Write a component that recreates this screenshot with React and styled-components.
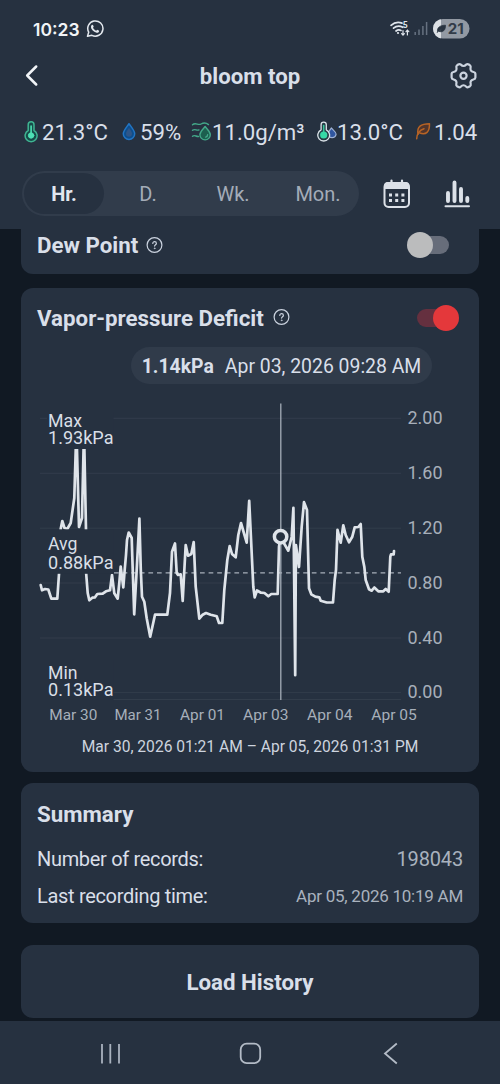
import React from 'react'
import styled, { createGlobalStyle } from 'styled-components'

const GlobalStyle = createGlobalStyle`
* {
    box-sizing: border-box;
}
body {
    margin: 0;
    background: #111923;
    font-family: Roboto, sans-serif;
    color: #d9dfe9;
}
`

const readings = [
    { icon: 'temp', value: '21.3°C', icw: 18, w: 66, gap: 14 },
    { icon: 'drop', value: '59%', icw: 18, w: 41, gap: 10 },
    { icon: 'humid', value: '11.0g/m³', icw: 21, w: 94, gap: 11 },
    { icon: 'dew', value: '13.0°C', icw: 20, w: 66, gap: 12 },
    { icon: 'leaf', value: '1.04', icw: 19, w: 43, gap: 0 },
]

const tabs = ['Hr.', 'D.', 'Wk.', 'Mon.']

const gridLines = [
    { y: 418.3, label: '2.00' },
    { y: 473.3, label: '1.60' },
    { y: 528.2, label: '1.20' },
    { y: 583, label: '0.80' },
    { y: 638, label: '0.40' },
    { y: 692.6, label: '0.00' },
]

const dates = [
    { x: 49.3, w: 48, label: 'Mar 30' },
    { x: 114.5, w: 47, label: 'Mar 31' },
    { x: 180, w: 45, label: 'Apr 01' },
    { x: 243, w: 45.5, label: 'Apr 03' },
    { x: 307, w: 45.5, label: 'Apr 04' },
    { x: 371.3, w: 45.5, label: 'Apr 05' },
]

const stats = [
    { y: 427, w: 34, label: 'Max' },
    { y: 444.3, w: 65.5, label: '1.93kPa' },
    { y: 549.7, w: 29.5, label: 'Avg' },
    { y: 569.3, w: 65.5, label: '0.88kPa' },
    { y: 679, w: 29.5, label: 'Min' },
    { y: 696.3, w: 65.5, label: '0.13kPa' },
]

const line = `40.7,585 42,590.3 45,589 48.3,589.5 51.3,598.7 57.3,598.7 59,574 60.7,529 62.3,521 64.5,528
67.3,529 70.7,523 74.3,498 76.4,428 79,527 82,518 84,430 86.2,540 86.2,574 87.7,593 89.3,600.3 92.3,597.7 95,597.3
97.3,594 102.7,593.7 106,591.3 110,590.3 112,575 114.3,593.3 117.7,598.7 119.3,583 120.7,566.7 123.3,587.3
124.7,570 126,555 127,540 128.7,532.5 131.7,538 132.3,557 134.2,614.3 136.7,570 139.4,518.5 140.8,570 142,596.7
144.3,601.7 146.7,618.3 150.2,636.7 153,624 155,614.7 167.3,614.7 170,593 172,551.7 175,543.5 176.7,573 178,575
180.7,574.3 182.7,601 183.8,580 185.7,545 188,555.7 191.3,554 193.7,542 195.7,586.7 199.3,618.7 202.7,614.7
206,613 210.7,614.7 216.7,616.3 219,623 222.3,623 224.3,590 227.3,560 229.7,546 232,554 235.7,557.3 238.3,535
241,523 246.7,542.7 249.2,500.8 251.7,553.3 253.3,586.7 254.7,597.3 257,590.5 261,592.7 264.5,593 268.3,596.3
271.3,594 277.7,594 279,546.7 280.5,537 285,545 288.3,550.7 291.7,536.7 293.4,507.8 295.2,675.2 295.9,545 299,567
301.7,526.7 304,502.2 307,510 309,588.3 311.3,594.3 315.3,596.7 319.3,597.3 320.7,600.7 326.7,602.5 333,602.3
334.7,580 336,570 337.5,529.8 340.7,542.7 343.3,525.3 345.7,535 349,542.3 352.3,536.7 354.7,527.3 358.3,527
360.7,524 362.3,556.7 364.3,566.7 365.7,580 369,589.3 371.7,590.7 374.3,587.5 378.3,591.3 383.3,591.3 385.7,589
388.7,591.7 390.3,556.7 391,554.3 393.7,554.3 394,551`

const ReadingIcon = ({ name, width }) => (
    <svg width={width} height="24" viewBox={`0 0 ${width} 24`} fill="none" strokeLinecap="round" strokeLinejoin="round">
        {name === 'temp' && (
            <g stroke="#3fb592" strokeWidth="1.5">
                <path d="M4.2 10.500V4.700a2.900 2.900 0 0 1 5.800 0v5.800a6 6 0 1 1-5.800 0Z" fill="#164c49" />
                <path d="M7.1 6v8" stroke="#4de0b4" strokeWidth="1.6" />
                <circle cx="7.1" cy="15.500" r="2.700" fill="#4de0b4" stroke="#4de0b4" strokeWidth="1" />
            </g>
        )}
        {name === 'drop' && (
            <>
                <path d="M7 3.700C4.500 7.300 1.300 10.600 1.300 13.800a5.700 5.700 0 0 0 11.400 0C12.700 10.600 9.500 7.300 7 3.700Z" fill="#0d4e8d" stroke="#2275c4" strokeWidth="1.500" />
                <path d="M7 7.700C5.500 10.200 4 11.700 4 13.700a3 3 0 0 0 6 0c0-2-1.500-3.500-3-6Z" fill="#2f5688" />
            </>
        )}
        {name === 'humid' && (
            <g stroke="#43a889" strokeWidth="1.400">
                <path d="M1.500 4.800c3.200-3 5.500 1 8.600-.8 2-1.200 4.500-1.800 7.400.6M1.500 10.300c2.500-2 4 .6 6.500-.4M1.500 16.300c2.500-2 3.500.6 6 .2" />
                <path d="M14.100 6.500C12.200 9.300 8.900 11.500 8.900 14.700a5.200 5.200 0 0 0 10.400 0c0-3.200-3.300-5.400-5.200-8.200Z" fill="#1c604f" />
                <path d="M16.600 14.800c0 1.200-.8 2.100-1.900 2.300" />
            </g>
        )}
        {name === 'dew' && (
            <>
                <path d="M14.300 8c-1.600 2.200-3.300 4-3.300 6.200a4.100 4.100 0 0 0 8.100 0c0-2.200-2.900-4-4.800-6.200Z" fill="#2f559f" stroke="#9fb2d4" strokeWidth="1.200" />
                <path d="M4.100 9.800V4.800a2.600 2.600 0 0 1 5.200 0v5a5.900 5.900 0 1 1-5.200 0Z" fill="#253d46" stroke="#dce3e9" strokeWidth="1.300" />
                <path d="M6.700 5.500v8" stroke="#36c79c" strokeWidth="1.500" />
                <circle cx="6.700" cy="15" r="3.600" fill="#36d9a6" />
            </>
        )}
        {name === 'leaf' && (
            <g stroke="#b76325" strokeWidth="1.500">
                <path d="M3.100 14.200C1.500 6.500 6 3.700 14.500 3.700c.2 8.500-3.500 11.500-9.800 9.300" fill="#51352c" />
                <path d="M1.700 18.700c.3-5.200 2.700-8.500 7.300-10" />
            </g>
        )}
    </svg>
)

const Help = () => (
    <svg width="17" height="17" viewBox="0 0 17 17" fill="none" stroke="#cbd3df" strokeLinecap="round">
        <circle cx="8.500" cy="8" r="7.400" strokeWidth="1.200" />
        <path d="M6.800 6.400c0-2.300 3.600-2.200 3.600 0 0 1.300-1.800 1.300-1.800 2.700" strokeWidth="1.200" />
        <circle cx="8.600" cy="11.300" r=".4" strokeWidth=".8" />
    </svg>
)

const StatusIcons = () => (
    <svg width="82" height="24" viewBox="388 17 82 24">
        <g fill="none" stroke="#dfe5ec" strokeWidth="1.700" strokeLinecap="round">
            <path d="M391 25.300c3.200-2.800 7.200-3.500 11-2.200" />
            <path d="M393.500 28.200c2.500-2.200 6.300-2.600 9.300-.9" />
            <path d="M396 31c1.500-1.200 3.400-1.400 5-.6" />
            <path d="M403 30.500v4.500m-1.400-1.400 1.400 1.500 1.400-1.500M407.400 35v-4.800m-1.400 1.500 1.400-1.500 1.400 1.500" strokeWidth="1.200" />
        </g>
        <circle cx="398" cy="33" r="1.100" fill="#dfe5ec" />
        <text x="402.700" y="28" fontSize="8.500" fontWeight="700" fill="#dfe5ec">5</text>
        <g stroke="#667180" strokeWidth="1.500">
            <path d="M415.200 32v3M419 29.500V35M422.900 26v9" />
            <path d="M426.600 22v13" />
        </g>
        <clipPath id="battery"><rect x="433" y="19" width="36.500" height="19.500" rx="9.750" /></clipPath>
        <g clipPath="url(#battery)">
            <rect x="433" y="19" width="37" height="20" fill="#9299a3" />
            <rect x="433" y="19" width="8" height="20" fill="#dce0e5" />
        </g>
        <path d="M437.500 31.500c-.6-4 2.500-6.300 8-6.300.2 5-2.600 7.500-6.500 6.200l3.500-3.200-5.500 4.300Z" fill="#283340" stroke="#283340" strokeWidth=".7" />
        <text x="447.700" y="34" fontSize="15" fontWeight="700" fontFamily="Inter, sans-serif" textLength="16" lengthAdjust="spacingAndGlyphs" fill="#323c48">21</text>
    </svg>
)

const Chart = () => (
    <svg width="426" height="330" viewBox="37 398 426 330">
        {gridLines.map((g) => (
            <React.Fragment key={g.label}>
                <path d={`M40 ${g.y}H401`} stroke="#323d4b" />
                <text x="407.500" y={g.y + 5.700} fontSize="17.500" fill="#a7afba" textLength="35" lengthAdjust="spacingAndGlyphs">{g.label}</text>
            </React.Fragment>
        ))}
        <path d="M40 699.500H401" stroke="#323d4b" />
        <path d="M114 572.800H401" stroke="#a7afb9" strokeWidth="1.300" strokeDasharray="4.700 3.900" />
        <polyline points={line} fill="none" stroke="#dfe4ea" strokeWidth="2.700" strokeLinejoin="round" strokeLinecap="round" />
        <g fill="#263140">
            <rect x="47" y="412" width="66.500" height="37" />
            <rect x="47" y="529.300" width="66.500" height="44.500" />
            <rect x="40" y="660" width="73.500" height="42" />
        </g>
        <path d="M280.800 403.500V700" stroke="#a5adb8" strokeWidth="1.300" />
        <circle cx="280.600" cy="536.700" r="6.200" fill="#263140" stroke="#dfe4ea" strokeWidth="3.500" />
        {stats.map((s) => (
            <text key={s.label} x="48" y={s.y} fontSize="17.600" fill="#d9dfe7" textLength={s.w} lengthAdjust="spacingAndGlyphs">{s.label}</text>
        ))}
        {dates.map((d) => (
            <text key={d.label} x={d.x} y="719.500" fontSize="15.500" fill="#a7afba" textLength={d.w} lengthAdjust="spacingAndGlyphs">{d.label}</text>
        ))}
    </svg>
)

const App = () => {
    return (
        <>
            <GlobalStyle />
            <Screen>
                <TopPanel>
                    <StatusBar>
                        <Clock>10:23</Clock>
                        <svg width="18" height="18" viewBox="0 0 18 18" fill="none" stroke="#e3e8ee" strokeWidth="1.500">
                            <path d="M1.500 16.300l1.200-4.100A7.600 7.600 0 1 1 5.900 15.300Z" strokeLinejoin="round" />
                            <path d="M5.600 5.200c.5-.7 1.200-.5 1.500.1l.6 1.500-.7 1c.8 1.500 1.800 2.400 3.200 3l1-1 1.900.9c.3 1.400-1.100 2.200-2.400 2-3.200-.5-6-3.700-5.700-6.100.1-.6.300-1.100.6-1.400Z" fill="#e3e8ee" stroke="none" />
                        </svg>
                        <Spacer />
                        <StatusIcons />
                    </StatusBar>
                    <Header>
                        <svg width="30" height="24" viewBox="0 0 30 24" fill="none" stroke="#f1f4f7" strokeWidth="2.500" strokeLinecap="round" strokeLinejoin="round">
                            <path d="M16.200 2.500 7.200 11.500l9 9" />
                        </svg>
                        <Title>bloom top</Title>
                        <svg width="30" height="30" viewBox="0 0 30 30" fill="none" stroke="#ccd4df" strokeWidth="2.200" strokeLinejoin="round">
                            <path d="M10.200 3.500Q11.500 2.600 12.700 3.500Q15.500 6.500 18.300 3.500Q19.500 2.600 20.800 3.500L22 4.300Q23 5 22.600 6.400Q21.700 10.300 25.400 11Q27.400 11.400 27.400 13V16.500Q27.400 18 25.400 18.500Q21.700 19.500 22.700 23Q23 24.500 22 25.200L20.500 26Q19.300 26.700 18.300 25.700Q15.500 22.800 12.700 25.700Q11.700 26.700 10.500 26L9 25.200Q8 24.500 8.300 23Q9.300 19.500 5.600 18.500Q3.600 18 3.600 16.500V13Q3.600 11.400 5.600 11Q9.300 10.300 8.400 6.400Q8 5 9 4.300Z" />
                            <circle cx="15.500" cy="14.700" r="3.100" />
                        </svg>
                    </Header>
                    <Readings>
                        {readings.map((r) => (
                            <Reading key={r.icon} $gap={r.gap}>
                                <ReadingIcon name={r.icon} width={r.icw} />
                                <Value $width={r.w}>{r.value}</Value>
                            </Reading>
                        ))}
                    </Readings>
                    <Controls>
                        <Tabs>
                            {tabs.map((t, i) => (
                                <Tab key={t} $active={i === 0}>{t}</Tab>
                            ))}
                        </Tabs>
                        <Actions>
                            <svg width="28" height="30" viewBox="0 0 28 30">
                                <rect x="1.500" y="4" width="24.500" height="24" rx="4" fill="none" stroke="#dce1e8" strokeWidth="2" />
                                <path d="M1 10V7a4 4 0 0 1 4-4h17.500a4 4 0 0 1 4 4v3Z" fill="#dce1e8" />
                                <path d="M8.500 1.500v4M19 1.500v4" stroke="#dce1e8" strokeWidth="2.200" strokeLinecap="round" />
                                <path d="M6 16h3m3.200 0h3m3.200 0h3M6 21.500h3m3.200 0h3m3.200 0h3" stroke="#dce1e8" strokeWidth="2.900" />
                            </svg>
                            <svg width="28" height="30" viewBox="0 0 28 30" stroke="#dce1e8" strokeLinecap="round">
                                <path d="M5 14v8M11.500 3.500v18.500M18 10v12M24.300 19v3" strokeWidth="3.900" />
                                <path d="M2.500 27.300h23.500" strokeWidth="2" />
                            </svg>
                        </Actions>
                    </Controls>
                </TopPanel>
                <Content>
                    <DewCard>
                        <CardTitle $width="100px">Dew Point</CardTitle>
                        <Help />
                        <Spacer />
                        <Switch><Thumb /></Switch>
                    </DewCard>
                    <ChartCard>
                        <CardHead>
                            <CardTitle $width="227px">Vapor-pressure Deficit</CardTitle>
                            <Help />
                            <Spacer />
                            <Switch $on><Thumb $on /></Switch>
                        </CardHead>
                        <Selected>
                            <b>1.14kPa</b>
                            <span>Apr 03, 2026 09:28 AM</span>
                        </Selected>
                        <Chart />
                        <Range>Mar 30, 2026 01:21 AM – Apr 05, 2026 01:31 PM</Range>
                    </ChartCard>
                    <SummaryCard>
                        <CardTitle>Summary</CardTitle>
                        <SummaryRow>
                            <span>Number of records:</span>
                            <Amount>198043</Amount>
                        </SummaryRow>
                        <SummaryRow>
                            <span>Last recording time:</span>
                            <Amount $small>Apr 05, 2026 10:19 AM</Amount>
                        </SummaryRow>
                    </SummaryCard>
                    <LoadButton>Load History</LoadButton>
                </Content>
                <NavBar>
                    <svg width="30" height="30" viewBox="0 0 30 30" stroke="#a9b2be" strokeWidth="1.800">
                        <path d="M7 5v19.500M15.300 5v19.500M24 5v19.500" />
                    </svg>
                    <svg width="30" height="30" viewBox="0 0 30 30" fill="none" stroke="#b3bbc6" strokeWidth="1.800">
                        <rect x="5.700" y="4.700" width="19.500" height="19.500" rx="6" />
                    </svg>
                    <svg width="30" height="30" viewBox="0 0 30 30" fill="none" stroke="#b3bbc6" strokeWidth="1.800">
                        <path d="M21.800 4.500 10 14.500l11.800 10" />
                    </svg>
                </NavBar>
            </Screen>
        </>
    )
}

export default App

const Screen = styled.div`
width: 500px;
height: 1084px;
display: flex;
flex-direction: column;
overflow: hidden;
`
const TopPanel = styled.div`
height: 229px;
flex: none;
background: #263140;
`
const StatusBar = styled.div`
height: 58px;
padding: 0 30px 0 33px;
display: flex;
align-items: center;
`
const Clock = styled.span`
width: 53px;
font-family: Inter, sans-serif;
font-size: 17.500px;
font-weight: 600;
color: #f1f4f7;
`
const Spacer = styled.div`
flex: 1;
`
const Header = styled.div`
height: 36px;
padding: 0 22px 0 20px;
display: flex;
align-items: center;
justify-content: space-between;
`
const Title = styled.h1`
margin: 0;
padding-left: 2px;
font-size: 22.200px;
font-weight: 700;
`
const Readings = styled.div`
height: 76px;
padding-left: 24px;
display: flex;
align-items: center;
`
const Reading = styled.div`
display: flex;
align-items: center;
flex: none;
margin-right: ${(p) => p.$gap}px;
`
const Value = styled.span`
width: ${(p) => p.$width}px;
font-size: 22.200px;
white-space: nowrap;
`
const Controls = styled.div`
padding: 1px 29px 0 22px;
display: flex;
align-items: center;
justify-content: space-between;
`
const Tabs = styled.div`
width: 337px;
height: 45px;
padding: 2px 0 2px 2px;
border-radius: 23px;
background: #313c4b;
display: grid;
grid-template-columns: 80px 84px 84px 84px;
justify-content: space-between;
`
const Tab = styled.div`
border-radius: 21px;
display: flex;
align-items: center;
justify-content: center;
font-size: 20px;
font-weight: ${(p) => (p.$active ? 700 : 400)};
color: ${(p) => (p.$active ? '#e1e6ee' : '#a4acb8')};
background: ${(p) => (p.$active ? '#263140' : 'transparent')};
&:nth-child(n + 2) {
    padding-left: 2px;
}
`
const Actions = styled.div`
display: flex;
gap: 32px;
`
const Content = styled.div`
flex: 1;
padding: 0 21px;
overflow: hidden;
`
const Card = styled.div`
padding: 0 16px;
border-radius: 12px;
background: #263140;
`
const DewCard = styled(Card)`
height: 45px;
padding: 0 30px 13px 16px;
border-radius: 0 0 12px 12px;
display: flex;
align-items: center;
gap: 9px;
`
const ChartCard = styled(Card)`
height: 484px;
margin-top: 14px;
display: flex;
flex-direction: column;
`
const CardHead = styled.div`
height: 59px;
padding: 0 4px 0 0;
display: flex;
align-items: center;
gap: 9px;
`
const CardTitle = styled.h2`
margin: 0;
width: ${(p) => p.$width || 'auto'};
font-size: 22.300px;
font-weight: 700;
white-space: nowrap;
`
const Switch = styled.div`
width: 42px;
height: 26px;
display: flex;
align-items: center;
justify-content: ${(p) => (p.$on ? 'flex-end' : 'flex-start')};
background: linear-gradient(${(p) => (p.$on ? '#65303f, #65303f' : '#676d7a, #676d7a')}) center / 20px 18px no-repeat;
&::before {
    content: '';
    order: ${(p) => (p.$on ? 0 : 1)};
    width: 16px;
    height: 18px;
    border-radius: ${(p) => (p.$on ? '9px 0 0 9px' : '0 9px 9px 0')};
    background: ${(p) => (p.$on ? '#65303f' : '#676d7a')};
}
`
const Thumb = styled.div`
width: 26px;
height: 26px;
order: ${(p) => (p.$on ? 1 : 0)};
border-radius: 50%;
background: ${(p) => (p.$on ? '#e4383b' : '#bbbcbd')};
`
const Selected = styled.div`
height: 37px;
width: 301px;
margin: 0 0 14px 94px;
padding-top: 2px;
border-radius: 19px;
background: #303b4a;
display: flex;
align-items: center;
justify-content: center;
gap: 11px;
font-size: 19.400px;
white-space: nowrap;
`
const Range = styled.div`
padding-top: 10px;
text-align: center;
font-size: 15.600px;
white-space: nowrap;
color: #cdd4df;
`
const SummaryCard = styled(Card)`
height: 140px;
margin-top: 11px;
padding-top: 18px;
`
const SummaryRow = styled.div`
height: 37px;
display: flex;
align-items: center;
justify-content: space-between;
font-size: 20px;
letter-spacing: -0.320px;
${CardTitle} + & {
    margin-top: 13px;
}
`
const Amount = styled.span`
font-size: ${(p) => (p.$small ? 17 : 20)}px;
letter-spacing: ${(p) => (p.$small ? -0.25 : -0.15)}px;
color: #a9b2be;
`
const LoadButton = styled.button`
width: 100%;
height: 73px;
margin-top: 22px;
padding-top: 2px;
border: none;
border-radius: 12px;
background: #263140;
color: #d9dfe9;
font-family: inherit;
font-size: 22.300px;
font-weight: 700;
`
const NavBar = styled.div`
height: 63px;
flex: none;
padding: 2px 95px 0;
background: #263140;
display: flex;
align-items: center;
justify-content: space-between;
`
